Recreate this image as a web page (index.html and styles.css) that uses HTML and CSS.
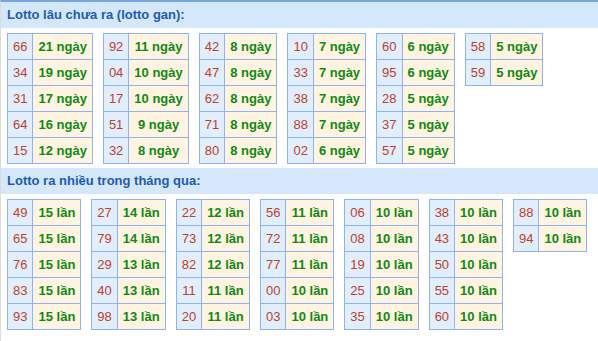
FILE: index.html
```html
<!DOCTYPE html>
<html lang="vi">
<head>
<meta charset="utf-8">
<link rel="stylesheet" href="styles.css">
</head>
<body>
<div class="box">
  <div class="head">Lotto lâu chưa ra (lotto gan):</div>
  <div class="blocks">
    <table class="t"><tr><td class="n">66</td><td class="v">21 ngày</td></tr><tr><td class="n">34</td><td class="v">19 ngày</td></tr><tr><td class="n">31</td><td class="v">17 ngày</td></tr><tr><td class="n">64</td><td class="v">16 ngày</td></tr><tr><td class="n">15</td><td class="v">12 ngày</td></tr></table>
    <table class="t"><tr><td class="n">92</td><td class="v">11 ngày</td></tr><tr><td class="n">04</td><td class="v">10 ngày</td></tr><tr><td class="n">17</td><td class="v">10 ngày</td></tr><tr><td class="n">51</td><td class="v">9 ngày</td></tr><tr><td class="n">32</td><td class="v">8 ngày</td></tr></table>
    <table class="t"><tr><td class="n">42</td><td class="v">8 ngày</td></tr><tr><td class="n">47</td><td class="v">8 ngày</td></tr><tr><td class="n">62</td><td class="v">8 ngày</td></tr><tr><td class="n">71</td><td class="v">8 ngày</td></tr><tr><td class="n">80</td><td class="v">8 ngày</td></tr></table>
    <table class="t"><tr><td class="n">10</td><td class="v">7 ngày</td></tr><tr><td class="n">33</td><td class="v">7 ngày</td></tr><tr><td class="n">38</td><td class="v">7 ngày</td></tr><tr><td class="n">88</td><td class="v">7 ngày</td></tr><tr><td class="n">02</td><td class="v">6 ngày</td></tr></table>
    <table class="t"><tr><td class="n">60</td><td class="v">6 ngày</td></tr><tr><td class="n">95</td><td class="v">6 ngày</td></tr><tr><td class="n">28</td><td class="v">5 ngày</td></tr><tr><td class="n">37</td><td class="v">5 ngày</td></tr><tr><td class="n">57</td><td class="v">5 ngày</td></tr></table>
    <table class="t"><tr><td class="n">58</td><td class="v">5 ngày</td></tr><tr><td class="n">59</td><td class="v">5 ngày</td></tr></table>
  </div>
  <div class="head">Lotto ra nhiều trong tháng qua:</div>
  <div class="blocks">
    <table class="t"><tr><td class="n">49</td><td class="v">15 lần</td></tr><tr><td class="n">65</td><td class="v">15 lần</td></tr><tr><td class="n">76</td><td class="v">15 lần</td></tr><tr><td class="n">83</td><td class="v">15 lần</td></tr><tr><td class="n">93</td><td class="v">15 lần</td></tr></table>
    <table class="t"><tr><td class="n">27</td><td class="v">14 lần</td></tr><tr><td class="n">79</td><td class="v">14 lần</td></tr><tr><td class="n">29</td><td class="v">13 lần</td></tr><tr><td class="n">40</td><td class="v">13 lần</td></tr><tr><td class="n">98</td><td class="v">13 lần</td></tr></table>
    <table class="t"><tr><td class="n">22</td><td class="v">12 lần</td></tr><tr><td class="n">73</td><td class="v">12 lần</td></tr><tr><td class="n">82</td><td class="v">12 lần</td></tr><tr><td class="n">11</td><td class="v">11 lần</td></tr><tr><td class="n">20</td><td class="v">11 lần</td></tr></table>
    <table class="t"><tr><td class="n">56</td><td class="v">11 lần</td></tr><tr><td class="n">72</td><td class="v">11 lần</td></tr><tr><td class="n">77</td><td class="v">11 lần</td></tr><tr><td class="n">00</td><td class="v">10 lần</td></tr><tr><td class="n">03</td><td class="v">10 lần</td></tr></table>
    <table class="t"><tr><td class="n">06</td><td class="v">10 lần</td></tr><tr><td class="n">08</td><td class="v">10 lần</td></tr><tr><td class="n">19</td><td class="v">10 lần</td></tr><tr><td class="n">25</td><td class="v">10 lần</td></tr><tr><td class="n">35</td><td class="v">10 lần</td></tr></table>
    <table class="t"><tr><td class="n">38</td><td class="v">10 lần</td></tr><tr><td class="n">43</td><td class="v">10 lần</td></tr><tr><td class="n">50</td><td class="v">10 lần</td></tr><tr><td class="n">55</td><td class="v">10 lần</td></tr><tr><td class="n">60</td><td class="v">10 lần</td></tr></table>
    <table class="t"><tr><td class="n">88</td><td class="v">10 lần</td></tr><tr><td class="n">94</td><td class="v">10 lần</td></tr></table>
  </div>
</div>
</body>
</html>
```

FILE: styles.css
```css
html, body {
  margin: 0;
  padding: 0;
  background: #fff;
}
body {
  font-family: "Liberation Sans", Arial, sans-serif;
  font-size: 13px;
}
.box {
  border-top: 2px solid #79a6dc;
  border-left: 1px solid #dcdcdc;
  height: 339px;
}
.head {
  background: #d5e7fb;
  color: #1c5cb0;
  font-weight: bold;
  height: 26px;
  line-height: 26px;
  padding-left: 6px;
}
.blocks {
  display: flex;
  flex-wrap: wrap;
  align-items: flex-start;
  gap: 10px;
  padding: 5px 6px 4px 6px;
}
.t {
  border-collapse: collapse;
}
.t td {
  border: 1px solid #8fb2f0;
  padding: 5px 5px;
  line-height: 15px;
  text-align: center;
  white-space: nowrap;
}
.t .n {
  background: #e1eefd;
  color: #bf4227;
}
.t .v {
  background: #fff3e2;
  color: #0f8a12;
  font-weight: bold;
}
```
